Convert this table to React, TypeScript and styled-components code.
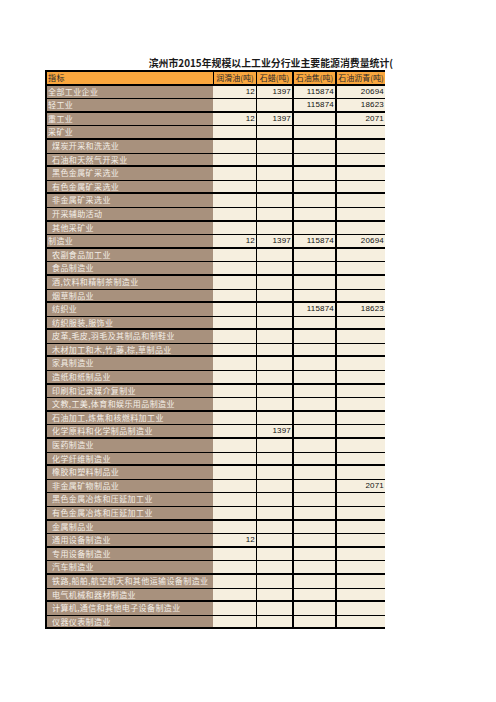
import React from 'react';
import styled, { createGlobalStyle } from 'styled-components';

const Global = createGlobalStyle`
  html, body { margin: 0; padding: 0; background: #ffffff; }
  body { font-family: "Noto Sans CJK SC", "Liberation Sans", sans-serif; }
`;

const Page = styled.div`
  padding: 57px 0 0 45px;
  width: 340px;
`;

const Title = styled.div`
  height: 13px;
  margin-right: -8px;
  text-align: right;
  font-size: 9.9px;
  line-height: 13px;
  font-weight: 700;
  color: #1a1a1a;
  white-space: nowrap;
`;

const Sheet = styled.div`
  border-top: 2px solid #000;
  border-left: 2px solid #000;
  border-right: 2px solid #000;
`;

const Row = styled.div<{ $thick: boolean }>`
  display: grid;
  grid-template-columns: 166px 43px 36px 43px 50px;
  height: 13.6px;
  box-sizing: border-box;
  border-bottom: ${p => (p.$thick ? 2 : 1)}px solid #000;
  margin-right: -2px;
`;

const Label = styled.div<{ $indent: boolean; $head?: boolean }>`
  background: ${p => (p.$head ? '#faa73e' : '#a8917d')};
  color: ${p => (p.$head ? '#2a2a2a' : '#f4efe8')};
  font-size: 8px;
  line-height: 12px;
  letter-spacing: 0.4px;
  padding-left: ${p => (p.$indent ? 5 : 1)}px;
  white-space: nowrap;
  overflow: hidden;
`;

const Cell = styled.div<{ $line: number; $head?: boolean }>`
  box-sizing: border-box;
  background: ${p => (p.$head ? '#faa73e' : '#f6efdf')};
  border-left: ${p => p.$line}px solid #000;
  font-family: ${p => (p.$head ? '"Noto Sans CJK SC", sans-serif' : '"Liberation Sans", Arial, sans-serif')};
  font-size: 8px;
  line-height: 12px;
  color: ${p => (p.$head ? '#2a2a2a' : '#111')};
  text-align: ${p => (p.$head ? 'center' : 'right')};
  padding-right: ${p => (p.$head ? 0 : 1)}px;
  letter-spacing: ${p => (p.$head ? 0 : 0.2)}px;
  white-space: nowrap;
  overflow: visible;
`;

type R = { name: string; indent?: boolean; v?: (string | null)[] };

const rows: R[] = [
  { name: '全部工业企业', v: ['12', '1397', '115874', '20694'] },
  { name: '轻工业', v: [null, null, '115874', '18623'] },
  { name: '重工业', v: ['12', '1397', null, '2071'] },
  { name: '采矿业' },
  { name: '煤炭开采和洗选业', indent: true },
  { name: '石油和天然气开采业', indent: true },
  { name: '黑色金属矿采选业', indent: true },
  { name: '有色金属矿采选业', indent: true },
  { name: '非金属矿采选业', indent: true },
  { name: '开采辅助活动', indent: true },
  { name: '其他采矿业', indent: true },
  { name: '制造业', v: ['12', '1397', '115874', '20694'] },
  { name: '农副食品加工业', indent: true },
  { name: '食品制造业', indent: true },
  { name: '酒,饮料和精制茶制造业', indent: true },
  { name: '烟草制品业', indent: true },
  { name: '纺织业', indent: true, v: [null, null, '115874', '18623'] },
  { name: '纺织服装,服饰业', indent: true },
  { name: '皮革,毛皮,羽毛及其制品和制鞋业', indent: true },
  { name: '木材加工和木,竹,藤,棕,草制品业', indent: true },
  { name: '家具制造业', indent: true },
  { name: '造纸和纸制品业', indent: true },
  { name: '印刷和记录媒介复制业', indent: true },
  { name: '文教,工美,体育和娱乐用品制造业', indent: true },
  { name: '石油加工,炼焦和核燃料加工业', indent: true },
  { name: '化学原料和化学制品制造业', indent: true, v: [null, '1397', null, null] },
  { name: '医药制造业', indent: true },
  { name: '化学纤维制造业', indent: true },
  { name: '橡胶和塑料制品业', indent: true },
  { name: '非金属矿物制品业', indent: true, v: [null, null, null, '2071'] },
  { name: '黑色金属冶炼和压延加工业', indent: true },
  { name: '有色金属冶炼和压延加工业', indent: true },
  { name: '金属制品业', indent: true },
  { name: '通用设备制造业', indent: true, v: ['12', null, null, null] },
  { name: '专用设备制造业', indent: true },
  { name: '汽车制造业', indent: true },
  { name: '铁路,船舶,航空航天和其他运输设备制造业', indent: true },
  { name: '电气机械和器材制造业', indent: true },
  { name: '计算机,通信和其他电子设备制造业', indent: true },
  { name: '仪器仪表制造业', indent: true },
];

const heads = ['润滑油(吨)', '石蜡(吨)', '石油焦(吨)', '石油沥青(吨)'];
const lines = [0, 1, 2, 2];

export default function App() {
  return (
    <>
      <Global />
      <Page>
        <Title>滨州市2015年规模以上工业分行业主要能源消费量统计(</Title>
        <Sheet>
          <Row $thick={true}>
            <Label $indent={false} $head>指标</Label>
            {heads.map((h, i) => (
              <Cell key={h} $line={i === 0 ? 1 : lines[i]} $head>{h}</Cell>
            ))}
          </Row>
          {rows.map((r, ri) => (
            <Row key={r.name} $thick={ri % 2 === 1}>
              <Label $indent={!!r.indent}>{r.name}</Label>
              {[0, 1, 2, 3].map(i => (
                <Cell key={i} $line={lines[i]}>{r.v && r.v[i] ? r.v[i] : ''}</Cell>
              ))}
            </Row>
          ))}
        </Sheet>
      </Page>
    </>
  );
}
